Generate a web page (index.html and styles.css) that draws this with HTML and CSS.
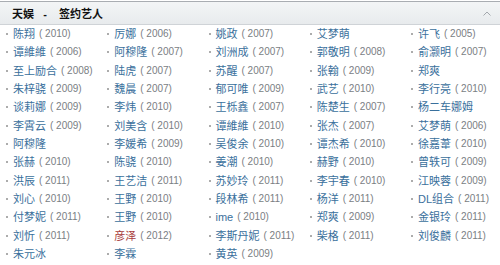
FILE: index.html
```html
<!DOCTYPE html>
<html lang="zh">
<head>
<meta charset="utf-8">
<link rel="stylesheet" href="styles.css">
</head>
<body>
<div class="panel">
  <div class="head">
    <span class="title">天娱&nbsp;&nbsp;&nbsp;-&nbsp;&nbsp;&nbsp;&nbsp;签约艺人</span>
    <span class="toggle"><svg width="8" height="5" viewBox="0 0 8 5"><path d="M0.5 4.5 L4 1 L7.5 4.5" fill="none" stroke="#a3a8ad" stroke-width="1"/></svg></span>
  </div>
  <ul class="list">
    <li><a>陈翔</a><span class="yr">( 2010)</span></li>
    <li><a>厉娜</a><span class="yr">( 2006)</span></li>
    <li><a>姚政</a><span class="yr">( 2007)</span></li>
    <li><a>艾梦萌</a></li>
    <li><a>许飞</a><span class="yr">( 2005)</span></li>

    <li><a>谭維維</a><span class="yr">( 2006)</span></li>
    <li><a>阿穆隆</a><span class="yr">( 2007)</span></li>
    <li><a>刘洲成</a><span class="yr">( 2007)</span></li>
    <li><a>郭敬明</a><span class="yr">( 2008)</span></li>
    <li><a>俞灏明</a><span class="yr">( 2007)</span></li>

    <li><a>至上励合</a><span class="yr">( 2008)</span></li>
    <li><a>陆虎</a><span class="yr">( 2007)</span></li>
    <li><a>苏醒</a><span class="yr">( 2007)</span></li>
    <li><a>张翰</a><span class="yr">( 2009)</span></li>
    <li><a>郑爽</a></li>

    <li><a>朱梓骁</a><span class="yr">( 2009)</span></li>
    <li><a>魏晨</a><span class="yr">( 2007)</span></li>
    <li><a>郁可唯</a><span class="yr">( 2009)</span></li>
    <li><a>武艺</a><span class="yr">( 2010)</span></li>
    <li><a>李行亮</a><span class="yr">( 2010)</span></li>

    <li><a>谈莉娜</a><span class="yr">( 2009)</span></li>
    <li><a>李炜</a><span class="yr">( 2010)</span></li>
    <li><a>王栎鑫</a><span class="yr">( 2007)</span></li>
    <li><a>陈楚生</a><span class="yr">( 2007)</span></li>
    <li><a>杨二车娜姆</a></li>

    <li><a>李霄云</a><span class="yr">( 2009)</span></li>
    <li><a>刘美含</a><span class="yr">( 2010)</span></li>
    <li><a>谭維維</a><span class="yr">( 2010)</span></li>
    <li><a>张杰</a><span class="yr">( 2007)</span></li>
    <li><a>艾梦萌</a><span class="yr">( 2006)</span></li>

    <li><a>阿穆隆</a></li>
    <li><a>李媛希</a><span class="yr">( 2009)</span></li>
    <li><a>吴俊余</a><span class="yr">( 2010)</span></li>
    <li><a>谭杰希</a><span class="yr">( 2010)</span></li>
    <li><a>徐嘉葦</a><span class="yr">( 2010)</span></li>

    <li><a>张赫</a><span class="yr">( 2010)</span></li>
    <li><a>陈骁</a><span class="yr">( 2010)</span></li>
    <li><a>姜潮</a><span class="yr">( 2010)</span></li>
    <li><a>赫野</a><span class="yr">( 2010)</span></li>
    <li><a>曾轶可</a><span class="yr">( 2009)</span></li>

    <li><a>洪辰</a><span class="yr">( 2011)</span></li>
    <li><a>王艺洁</a><span class="yr">( 2011)</span></li>
    <li><a>苏妙玲</a><span class="yr">( 2011)</span></li>
    <li><a>李宇春</a><span class="yr">( 2010)</span></li>
    <li><a>江映蓉</a><span class="yr">( 2009)</span></li>

    <li><a>刘心</a><span class="yr">( 2010)</span></li>
    <li><a>王野</a><span class="yr">( 2010)</span></li>
    <li><a>段林希</a><span class="yr">( 2011)</span></li>
    <li><a>杨洋</a><span class="yr">( 2011)</span></li>
    <li><a>DL组合</a><span class="yr">( 2011)</span></li>

    <li><a>付梦妮</a><span class="yr">( 2011)</span></li>
    <li><a>王野</a><span class="yr">( 2010)</span></li>
    <li><a>ime</a><span class="yr">( 2010)</span></li>
    <li><a>郑爽</a><span class="yr">( 2009)</span></li>
    <li><a>金银玲</a><span class="yr">( 2011)</span></li>

    <li><a>刘忻</a><span class="yr">( 2011)</span></li>
    <li><a class="hot">彦泽</a><span class="yr">( 2012)</span></li>
    <li><a>李斯丹妮</a><span class="yr">( 2011)</span></li>
    <li><a>柴格</a><span class="yr">( 2011)</span></li>
    <li><a>刘俊麟</a><span class="yr">( 2011)</span></li>

    <li><a>朱元冰</a></li>
    <li><a>李霖</a></li>
    <li><a>黄英</a><span class="yr">( 2009)</span></li>
  </ul>
</div>
</body>
</html>
```

FILE: styles.css
```css
html, body {
  margin: 0;
  padding: 0;
  background: #ffffff;
}

.panel {
  width: 500px;
  font-family: "Liberation Sans", "Noto Sans CJK SC", sans-serif;
}

.head {
  height: 22px;
  margin-top: 1px;
  border-top: 1px solid #a9adb2;
  border-bottom: 1px solid #cfd3d7;
  background: linear-gradient(#f3f5f6, #e8ebed);
  display: flex;
  align-items: center;
  justify-content: space-between;
  padding: 0 9px 0 12px;
}

.title {
  font-size: 11px;
  font-weight: bold;
  color: #111;
}

.toggle {
  display: flex;
  align-items: center;
}

.list {
  list-style: none;
  margin: 0;
  padding: 0;
  display: grid;
  grid-template-columns: repeat(5, 101.25px);
  grid-auto-rows: 18.33px;
  font-size: 11px;
}

.list li {
  white-space: nowrap;
  line-height: 18.33px;
  display: flex;
  align-items: center;
}

.list li::before {
  content: "";
  width: 2px;
  height: 2px;
  background: #acacac;
  margin: 0 5px 0 6px;
  flex: none;
}

.list a {
  color: #3a709c;
}

.list a.hot {
  color: #a83a3a;
}

.yr {
  color: #7a7e83;
  font-size: 10px;
  margin-left: 4px;
  white-space: pre;
}
```
